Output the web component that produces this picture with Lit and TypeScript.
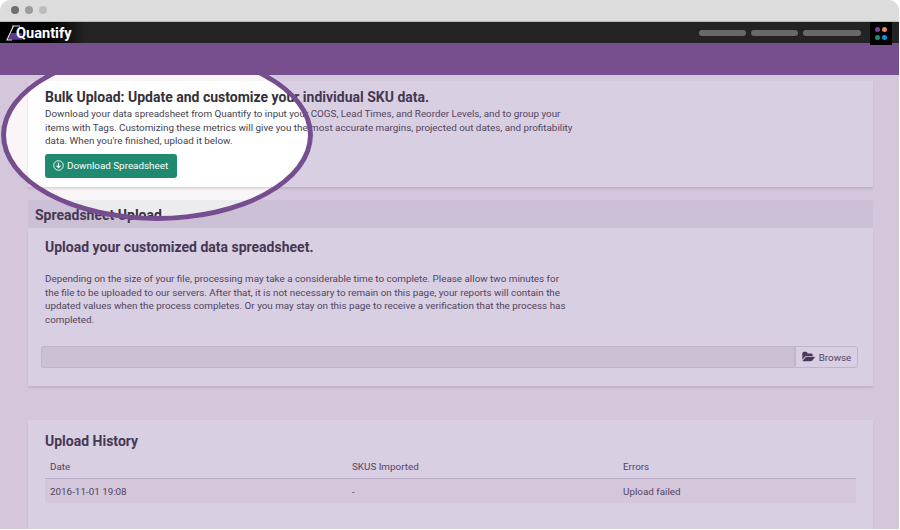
import { LitElement, css, html } from 'lit';
import { customElement } from 'lit/decorators.js';

const history = [{ date: '2016-11-01 19:08', skus: '-', errors: 'Upload failed' }];

@customElement('app-root')
export class AppRoot extends LitElement {
  render() {
    return html`
      <div class="window">
        <div class="chrome">
          <span class="light l1"></span>
          <span class="light l2"></span>
          <span class="light l3"></span>
        </div>
        <div class="nav">
          <div class="brand">
            <svg class="flask" width="17" height="16" viewBox="0 0 17 16">
              <path d="M5.500 8 L15.500 8 L16 14.800 L2 14.800 Z" fill="#5f3a90" />
              <path d="M6 1 H14 M7.500 1 L1 15 H6" fill="none" stroke="#dcd8e0" stroke-width="1.200" />
            </svg>
            <span class="brand-name">Quantify</span>
          </div>
          <div class="pills">
            <span class="pill p1"></span>
            <span class="pill p2"></span>
            <span class="pill p3"></span>
          </div>
          <div class="apps">
            <span class="dot" style="background:#7d3fa0"></span>
            <span class="dot" style="background:#e98b4f"></span>
            <span class="dot" style="background:#1f8a70"></span>
            <span class="dot" style="background:#0a94e0"></span>
          </div>
        </div>
        <div class="band"></div>
        <main class="main">
          <section class="card intro">
            <h2>Bulk Upload: Update and customize your individual SKU data.</h2>
            <p>
              Download your data spreadsheet from Quantify to input your COGS, Lead Times, and Reorder Levels, and to group your<br />
              items with Tags. Customizing these metrics will give you the most accurate margins, projected out dates, and profitability<br />
              data. When you're finished, upload it below.
            </p>
            <button class="download">
              <svg width="11" height="11" viewBox="0 0 12 12" fill="none" stroke="#fff" stroke-width="1">
                <circle cx="6" cy="6" r="5.200" />
                <path d="M6 3 V8.200 M3.800 6.200 L6 8.400 L8.200 6.200" stroke-width="1.200" />
              </svg>
              Download Spreadsheet
            </button>
          </section>

          <section class="panel">
            <div class="panel-head">Spreadsheet Upload</div>
            <div class="card panel-body">
              <h2>Upload your customized data spreadsheet.</h2>
              <p class="notes">
                Depending on the size of your file, processing may take a considerable time to complete. Please allow two minutes for<br />
                the file to be uploaded to our servers. After that, it is not necessary to remain on this page, your reports will contain the<br />
                updated values when the process completes. Or you may stay on this page to receive a verification that the process has<br />
                completed.
              </p>
              <div class="file-row">
                <div class="file-input"></div>
                <button class="browse">
                  <svg width="14" height="12" viewBox="0 0 1920 1792" fill="#3c3244">
                    <path d="M1845 931q0 35-53 93l-336 396q-43 51-120.500 86.500t-143.500 35.500h-1088q-34 0-60.500-13t-26.500-43q0-35 53-93l336-396q43-51 120.500-86.500t143.500-35.500h1088q34 0 60.500 13t26.500 43zm-343-344v160h-832q-94 0-197 47.500t-164 119.500l-337 396-5 6q0-4-.5-12.500t-.5-12.500v-960q0-92 66-158t158-66h320q92 0 158 66t66 158v32h544q92 0 158 66t66 158z" />
                  </svg>
                  Browse
                </button>
              </div>
            </div>
          </section>

          <section class="card history">
            <h2>Upload History</h2>
            <table>
              <thead>
                <tr><th class="c1">Date</th><th class="c2">SKUS Imported</th><th>Errors</th></tr>
              </thead>
              <tbody>
                ${history.map(
                  (row) => html`<tr><td>${row.date}</td><td>${row.skus}</td><td>${row.errors}</td></tr>`,
                )}
              </tbody>
            </table>
          </section>

          <div class="spotlight"><div class="ring"></div></div>
        </main>
      </div>
    `;
  }

  static styles = css`
    :host {
      display: block;
      width: 900px;
      height: 530px;
      overflow: hidden;
      background: #fff;
      font-family: Roboto, 'Liberation Sans', sans-serif;
      color: #3c3244;
    }

    .window {
      width: 899px;
      height: 529px;
      display: flex;
      flex-direction: column;
      border-radius: 10px 10px 0 0;
      overflow: hidden;
    }

    .chrome {
      height: 22px;
      flex: none;
      display: flex;
      align-items: center;
      gap: 6px;
      padding: 0 0 2px 11px;
      box-sizing: border-box;
      background: #dcdcdc;
      border-bottom: 1px solid #b9b9b9;
    }

    .light {
      width: 8px;
      height: 8px;
      border-radius: 50%;
    }
    .l1 { background: #6e6e6e; }
    .l2 { background: #9c9c9c; }
    .l3 { background: #bdbdbd; }

    .nav {
      height: 21px;
      flex: none;
      display: flex;
      align-items: center;
      padding-left: 6px;
      background: linear-gradient(90deg, #000 0, #000 50px, #232323 85px);
    }

    .brand {
      display: flex;
      align-items: center;
      flex: 1;
    }

    .flask {
      margin-right: -7px;
      margin-top: 1px;
    }

    .brand-name {
      font-size: 15.500px;
      font-weight: 700;
      color: #fff;
      transform: scaleX(0.94);
      transform-origin: left center;
    }

    .pills {
      display: flex;
      gap: 5px;
      margin-right: 9px;
    }

    .pill {
      height: 6px;
      border-radius: 3px;
      background: #686868;
    }
    .p1 { width: 47px; }
    .p2 { width: 47px; }
    .p3 { width: 58px; }

    .apps {
      width: 22px;
      height: 23px;
      margin-right: 7px;
      margin-bottom: -1px;
      box-sizing: border-box;
      padding: 6px 5px;
      display: grid;
      grid-template-columns: 5px 5px;
      gap: 3px 2px;
      justify-content: center;
      align-content: center;
      background: #000;
      position: relative;
      z-index: 1;
    }

    .dot {
      width: 5px;
      height: 5px;
      border-radius: 50%;
    }

    .band {
      height: 32px;
      flex: none;
      background: #774e8e;
    }

    .main {
      position: relative;
      flex: 1;
      overflow: hidden;
      background: #faf5f6;
      padding: 6px 26px 0 28px;
    }

    .card {
      background: #fff;
      box-shadow: 0 2px 2px rgba(0, 0, 0, 0.12);
    }

    h2 {
      margin: 0;
      font-size: 14px;
      line-height: 18px;
      font-weight: 700;
      color: #35303a;
    }

    p {
      margin: 0;
      font-size: 9.850px;
      line-height: 13.500px;
      color: #45414a;
    }

    .intro {
      height: 106px;
      box-sizing: border-box;
      padding: 7px 17px 0;
    }

    .intro p {
      margin-top: 1px;
    }

    .download {
      all: unset;
      margin-top: 6px;
      width: 132px;
      height: 24px;
      box-sizing: border-box;
      padding-left: 8px;
      display: flex;
      align-items: center;
      gap: 3px;
      border-radius: 3px;
      background: #1f8a70;
      color: #fff;
      font-size: 9.850px;
    }

    .panel {
      margin-top: 13px;
    }

    .panel-head {
      height: 28px;
      box-sizing: border-box;
      padding: 6px 7px 0;
      background: #ecebed;
      font-size: 14px;
      line-height: 18px;
      font-weight: 700;
      color: #35303a;
      border-radius: 3px 3px 0 0;
    }

    .panel-body {
      height: 158px;
      box-sizing: border-box;
      padding: 10px 15px 0 13px;
    }

    .panel-body h2 {
      margin-left: 4px;
    }

    .notes {
      margin: 16px 0 0 4px;
    }

    .file-row {
      display: flex;
      margin-top: 20px;
    }

    .file-input {
      flex: 1;
      height: 22px;
      box-sizing: border-box;
      background: #eeebee;
      border: 1px solid #dfdbe0;
      border-radius: 3px 0 0 3px;
    }

    .browse {
      all: unset;
      width: 63px;
      height: 22px;
      box-sizing: border-box;
      display: flex;
      align-items: center;
      justify-content: center;
      gap: 3px;
      background: #fff;
      border: 1px solid #dfdbe0;
      border-radius: 0 3px 3px 0;
      font-size: 9.850px;
      color: #45414a;
    }

    .history {
      margin-top: 34px;
      height: 130px;
      box-sizing: border-box;
      padding: 12px 17px 0;
    }

    table {
      width: 811px;
      margin-top: 4px;
      border-collapse: collapse;
      table-layout: fixed;
      font-size: 9.850px;
      color: #45414a;
    }

    th {
      height: 24px;
      padding: 0 5px;
      text-align: left;
      font-weight: 400;
      border-bottom: 1px solid #d5d0d8;
    }

    .c1 { width: 292px; }
    .c2 { width: 261px; }

    td {
      height: 24px;
      padding: 0 5px;
      background: #faf5f6;
    }

    .spotlight {
      position: absolute;
      inset: 0;
      overflow: hidden;
      pointer-events: none;
    }

    .ring {
      position: absolute;
      left: 1px;
      top: -26px;
      width: 312px;
      height: 172px;
      box-sizing: border-box;
      border: 5px solid #764d8e;
      border-radius: 50%;
      box-shadow: 0 0 0 900px rgba(116, 79, 146, 0.27);
    }
  `;
}

declare global {
  interface HTMLElementTagNameMap {
    'app-root': AppRoot;
  }
}
